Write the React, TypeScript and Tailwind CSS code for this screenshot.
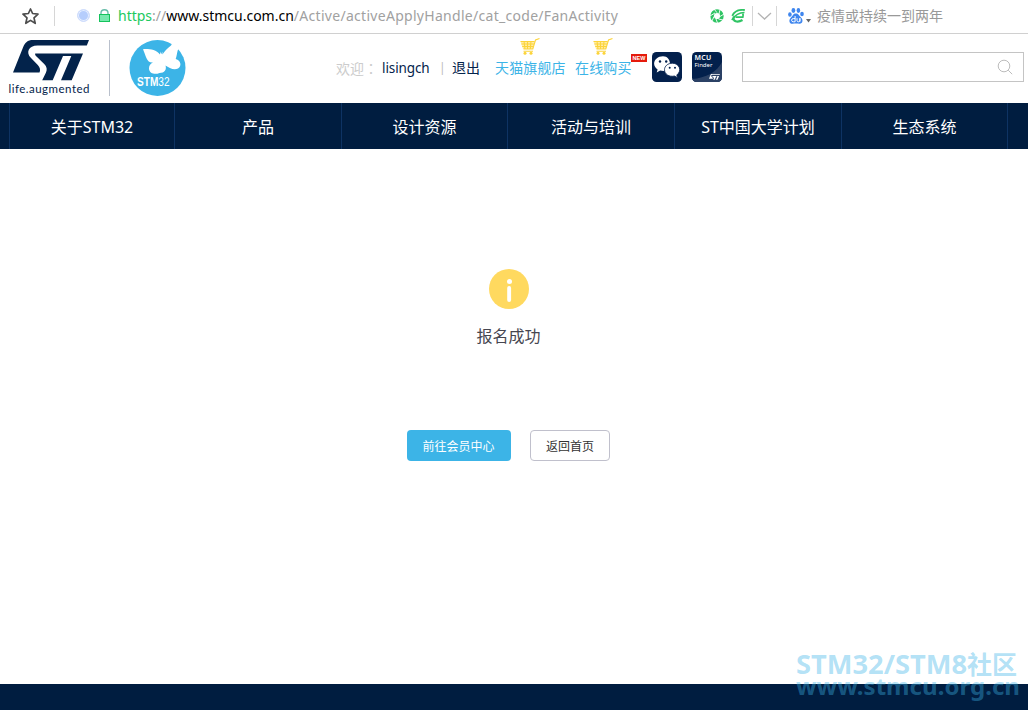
import React from "react";

const NAV_ITEMS = [
  { label: "关于STM32", width: "w-[165px]" },
  { label: "产品", width: "w-[167px]" },
  { label: "设计资源", width: "w-[166px]" },
  { label: "活动与培训", width: "w-[167px]" },
  { label: "ST中国大学计划", width: "w-[167px]" },
  { label: "生态系统", width: "w-[166px]" },
];

function StarIcon() {
  return (
    <svg className="ml-[22px] mt-[8px] h-[17px] w-[17px] shrink-0" viewBox="0 0 17 17" fill="none" stroke="#4d4d4d" strokeWidth="1.7" strokeLinejoin="round">
      <path d="M8.500 1 10.600 5.500 16 6.200 12 9.900l1.200 5.400-4.700-2.900-4.700 2.900L5 9.900 1 6.200 6.400 5.500Z" />
    </svg>
  );
}

function ApertureIcon() {
  return (
    <svg className="-ml-px h-[14px] w-[14px] shrink-0" viewBox="0 0 14 14" fill="none">
      <circle cx="7" cy="7" r="4.900" stroke="#2fc464" strokeWidth="3.600" />
      <path d="M4 0 7 3.700M10 .5 9 5M14 5 10 7.500M13 11 8.500 10M7.500 14 6 10M2 12l2-4.500M0 7l5-3" stroke="#fff" strokeWidth=".9" />
    </svg>
  );
}

function SwiftIcon() {
  return (
    <svg className="ml-[7px] h-[14px] w-[14px] shrink-0" viewBox="0 0 14 14" fill="none" stroke="#2fc464">
      <path d="M13.800 1C7.500.4 3.200 2.500 1.300 6.800" strokeWidth="1.900" />
      <path d="M13.500 3.600C8.500 3.500 4.500 5.500.8 11" strokeWidth="1.500" />
      <path d="M11.800 4.500c.5 1.200.5 2.400 0 3.700H4.500" strokeWidth="1.800" />
      <path d="M3 7.500c-2 5 3.500 6.500 8.500 3.500" strokeWidth="2.200" />
    </svg>
  );
}

function PawIcon() {
  return (
    <svg className="ml-[11px] h-[16px] w-[16px] shrink-0" viewBox="0 0 16 16">
      <g fill="#3f86ee">
        <ellipse cx="1.900" cy="6.500" rx="1.800" ry="2.200" />
        <ellipse cx="5.400" cy="2.500" rx="1.900" ry="2.400" />
        <ellipse cx="10.400" cy="2.500" rx="1.800" ry="2.400" />
        <ellipse cx="14" cy="6" rx="1.800" ry="2.200" />
        <path d="M7.800 5.500C10.500 5.500 11 7.700 13 9.500c2.700 2.500 1.500 6.500-1.700 6.200-2.200-.3-4.600-.3-6.600 0C1.200 16 .3 12 3 9.400 5 7.700 5.200 5.500 7.800 5.500Z" />
      </g>
      <path d="M7.100 8v5.800H5.200a1.400 1.400 0 0 1 0-3.200h1.900M9 10.200v2.500c0 1.500 2.900 1.500 2.900 0v-2.500 3.600" fill="none" stroke="#fff" strokeWidth="1" />
    </svg>
  );
}

function BrowserBar() {
  return (
    <div className="flex h-[34px] shrink-0 border-b border-[#d0d0d0] bg-white">
      <StarIcon />
      <span className="ml-[15px] mt-[6px] h-[20px] w-px bg-[#d6d6d6]" />
      <span className="ml-[22px] mt-[9px] h-[13px] w-[13px] rounded-full border border-[#cfddfc] bg-[#b5cdfc] shadow-[inset_0_0_0_1px_#e6eefe]" />
      <svg className="ml-[8px] mt-[9px] h-[14px] w-[13px]" viewBox="0 0 13 14" fill="none">
        <path d="M3 6V4a3.500 3.200 0 0 1 7 0v2" stroke="#68bda9" strokeWidth="1.400" />
        <rect x="1.500" y="5.500" width="10" height="7" fill="#78e9ae" stroke="#15c35c" strokeWidth="1" />
      </svg>
      <div className="ml-[7px] w-[593px] whitespace-nowrap font-['Noto_Sans','Noto_Sans_CJK_SC',sans-serif] text-[14px] leading-[32px] text-[#a1a1a1]">
        <span className="text-[#20c960]">https</span>://<span className="text-black">www.stmcu.com.cn</span><span className="tracking-[0.290px]">/Active/activeApplyHandle/cat_code/FanActivity</span>
      </div>
      <div className="flex h-[32px] items-center">
        <ApertureIcon />
        <SwiftIcon />
        <span className="ml-[7px] h-[20px] w-px bg-[#d6d6d6]" />
        <svg className="ml-[4px] h-[9px] w-[15px]" viewBox="0 0 15 9" fill="none" stroke="#b3b3b3" strokeWidth="1.300"><path d="m1 1 6.500 6L14 1" /></svg>
        <span className="ml-[4px] h-[20px] w-px bg-[#d6d6d6]" />
        <PawIcon />
        <svg className="ml-[2px] mt-[9px] h-[4px] w-[5px]" viewBox="0 0 5 4"><path d="M0 0h5L2.500 3.500Z" fill="#666" /></svg>
        <span className="ml-[6px] text-[14px] leading-[30px] text-[#999]">疫情或持续一到两年</span>
      </div>
    </div>
  );
}

function StMark({ className }: { className: string }) {
  return (
    <svg className={className} viewBox="0 0 76 41" fill="currentColor">
      <path d="M0 32.500 10 7.500C12 2.500 14.500 0 20 0h56l-2.200 5.500H24.500c-9 0-12 7-6.500 12.500l6.800 7c2.400 2.500 2.800 5 1.700 7.500Z" />
      <path d="M22.200 13.500H70L58.700 40.300H48L58.300 16H50L39.700 40.300H29.200L33 32.500c1.300-3.200 1-5.800-1.800-8.600l-7.700-7.400c-1.200-1.200-1.600-2-1.300-3Z" />
    </svg>
  );
}

function ButterflyLogo() {
  return (
    <svg className="ml-[19px] mt-[6px] h-[56px] w-[57px] shrink-0" viewBox="0 0 57 56">
      <circle cx="28.500" cy="28" r="28" fill="#3cb4e7" />
      <path
        d="M14 9.200C20 8.800 27 9.500 31 14.500l.5-3 .7 2.800 1.200-2.800v3C36 11 38 8.500 42 5.500L45 0l6 6-2.300 4.500c-.8 3-1.200 6.500-2 8.500C52 20.500 53 26 49 28.500c-4 2-9-.5-12.500-3 1.400 4-1 7.500-6 7.500-4.500 2-10 .5-10.500-4-.2-3.300 1.300-5.500 4-6.500C17.500 23 17 16 14 9.200Z"
        fill="#fff"
      />
      <g fill="#fff" transform="translate(8 46) scale(.84 1)" fontFamily="Liberation Sans, sans-serif" fontSize="12">
        <text x="0" y="0"><tspan fontWeight="700">STM</tspan><tspan>32</tspan></text>
      </g>
    </svg>
  );
}

function CartIcon() {
  return (
    <svg className="h-[17px] w-[20px]" viewBox="0 0 20 17" fill="none">
      <path d="M.500 3.500h14L13 11H3Z" fill="#ffeda6" />
      <path d="M.5 3.500h13.800M1.400 6h12.300M2.200 8.500h11M3.500 11h9.300L15.500 2l4-1.500M4 3l1 8M7.500 3v8M11 3l-.7 8M3.500 13.200H13" stroke="#fcd43a" strokeWidth="1.100" />
      <circle cx="5" cy="15.200" r="1.500" fill="#fcd43a" />
      <circle cx="11" cy="15.200" r="1.500" fill="#fcd43a" />
    </svg>
  );
}

function WechatTile() {
  return (
    <svg className="mt-[18px] h-[30px] w-[30px] shrink-0" viewBox="0 0 30 30">
      <rect width="30" height="30" rx="4.500" fill="#03204c" />
      <path d="M11 4.200c-5 0-8.900 3.300-8.900 7.400 0 2.500 1.300 4.500 3.500 5.800l-.9 3 3.500-1.900c1.500.4 3.300.5 4.800.3C20 18.500 20 4.200 11 4.200Z" fill="#fff" />
      <path d="M20.300 11.200c-4.500 0-7.800 3-7.800 6.500 0 4.500 4.700 7.500 10 6.300l3 1.700-.7-2.700c5.600-4.400 2.500-11.800-4.500-11.800Z" fill="#fff" stroke="#03204c" strokeWidth=".8" />
      <g fill="#03204c"><circle cx="8" cy="9.500" r="1.200" /><circle cx="14.200" cy="9.500" r="1.200" /><circle cx="17.700" cy="15.800" r="1" /><circle cx="23" cy="15.800" r="1" /></g>
    </svg>
  );
}

function FinderTile() {
  return (
    <div className="relative ml-[10px] mt-[18px] h-[30px] w-[30px] shrink-0 overflow-hidden rounded-[4.500px] bg-[#03204c] font-['Noto_Sans',sans-serif] text-white">
      <svg className="absolute inset-0 h-[30px] w-[30px]" viewBox="0 0 30 30"><path d="M0 27C14 26 25 20 30 10v20H0Z" fill="#2b4165" /></svg>
      <div className="relative pl-[2.500px] pt-[2px] text-[7px] font-semibold leading-[8px] tracking-[0.300px]">MCU</div>
      <div className="relative pl-[2.500px] text-[6px] leading-[7px]">Finder</div>
      <StMark className="absolute bottom-[2px] right-[2px] h-[6px] w-[11px]" />
    </div>
  );
}

function ShopLink({ label, badge }: { label: string; badge?: boolean }) {
  return (
    <a className="relative flex w-[71px] shrink-0 flex-col pt-[4px] text-[#3cb4e7]">
      <span className={badge ? "ml-[18px] h-[18px]" : "ml-[25px] h-[18px]"}><CartIcon /></span>
      <span className="whitespace-nowrap text-[14px] leading-[24px] tracking-[0.150px]">{label}</span>
      {badge && <span className="absolute left-[56px] top-[20px] h-[8px] w-[16px] bg-[#e51b0c] text-center font-['Liberation_Sans',sans-serif] text-[5.500px] font-bold leading-[8px] text-white">NEW</span>}
    </a>
  );
}

function Header() {
  return (
    <header className="flex h-[69px] shrink-0 bg-white">
      <div className="ml-[9px] w-[81px] shrink-0 pt-[6px] text-[#03234b]">
        <StMark className="ml-[4px] block h-[41px] w-[76px]" />
        <svg className="block h-[18px] w-[81px] overflow-visible" viewBox="0 0 81 18">
          <text x="-.5" y="12" fontFamily="Lato, sans-serif" fontSize="11.500" fill="#03234b" textLength="81" lengthAdjust="spacing">life.augmented</text>
        </svg>
      </div>
      <span className="ml-[19px] mt-[6px] h-[56px] w-px shrink-0 bg-[#b9c0cc]" />
      <ButterflyLogo />
      <div className="ml-[150px] flex w-[159px] shrink-0 whitespace-nowrap pt-[22px] text-[14px] leading-[24px]">
        <span className="w-[46px] text-[#ccc]">欢迎<span className="font-['Noto_Sans_CJK_TC',sans-serif]" lang="zh-TW">：</span></span>
        <span className="w-[57px] text-[13.500px] tracking-[-0.100px] text-[#03234b]">lisingch</span>
        <span className="w-[13px] text-[12px] leading-[24px] text-[#bbb]">|</span>
        <span className="text-[#03234b]">退出</span>
      </div>
      <ShopLink label="天猫旗舰店" />
      <div className="ml-[9px] w-[77px] shrink-0"><ShopLink label="在线购买" badge /></div>
      <WechatTile />
      <FinderTile />
      <div className="ml-[20px] mt-[18px] flex h-[30px] w-[282px] shrink-0 items-center justify-end border border-[#c4c4c4] pr-[10px]">
        <svg className="h-[16px] w-[16px]" viewBox="0 0 16 16" fill="none" stroke="#bcbcbc" strokeWidth="1"><circle cx="7" cy="7" r="5.800" /><path d="m11.200 11.200 4 4" /></svg>
      </div>
    </header>
  );
}

export default function App() {
  return (
    <div className="relative flex h-[710px] w-[1028px] flex-col overflow-hidden bg-white font-['Noto_Sans','Noto_Sans_CJK_SC',sans-serif]">
      <BrowserBar />
      <Header />
      <nav className="flex h-[46px] shrink-0 bg-[#001d40] pl-[9px] text-[16px] leading-[48px] text-white">
        {NAV_ITEMS.map((item) => (
          <a key={item.label} className={`${item.width} shrink-0 border-l border-[#0e3363] text-center`}>{item.label}</a>
        ))}
        <span className="border-l border-[#0e3363]" />
      </nav>
      <main className="flex flex-1 flex-col items-center pr-[11px] pt-[120px]">
        <svg className="h-[40px] w-[40px]" viewBox="0 0 40 40"><circle cx="20" cy="20" r="20" fill="#ffd95f" /><circle cx="20.500" cy="12.400" r="2.500" fill="#fff" /><rect x="18.200" y="17" width="3.900" height="16" rx="1.950" fill="#fff" /></svg>
        <p className="mt-[15px] text-[16px] leading-[24px] text-[#464650]">报名成功</p>
        <div className="mt-[82px] flex gap-[19px] text-[12px]">
          <button className="h-[31px] w-[104px] rounded-[4px] bg-[#3cb4e7] pr-px pt-[3px] text-white">前往会员中心</button>
          <button className="h-[31px] w-[80px] rounded-[4px] border border-[#c0c0cc] bg-white pt-[3px] text-[#333]">返回首页</button>
        </div>
      </main>
      <footer className="h-[26px] shrink-0 bg-[#001d40]" />
      <svg className="absolute left-[790px] top-[642px] h-[68px] w-[238px]" viewBox="0 0 238 68" fill="#3cb4e7" fillOpacity=".4" fontFamily="Noto Sans, Noto Sans CJK SC, sans-serif" fontWeight="700">
        <text x="6" y="32" fontSize="26" textLength="171" lengthAdjust="spacingAndGlyphs">STM32/STM8</text>
        <text x="177" y="32" fontSize="25" textLength="50" lengthAdjust="spacingAndGlyphs">社区</text>
        <text x="6" y="53" fontSize="23" textLength="224" lengthAdjust="spacingAndGlyphs">www.stmcu.org.cn</text>
      </svg>
    </div>
  );
}
